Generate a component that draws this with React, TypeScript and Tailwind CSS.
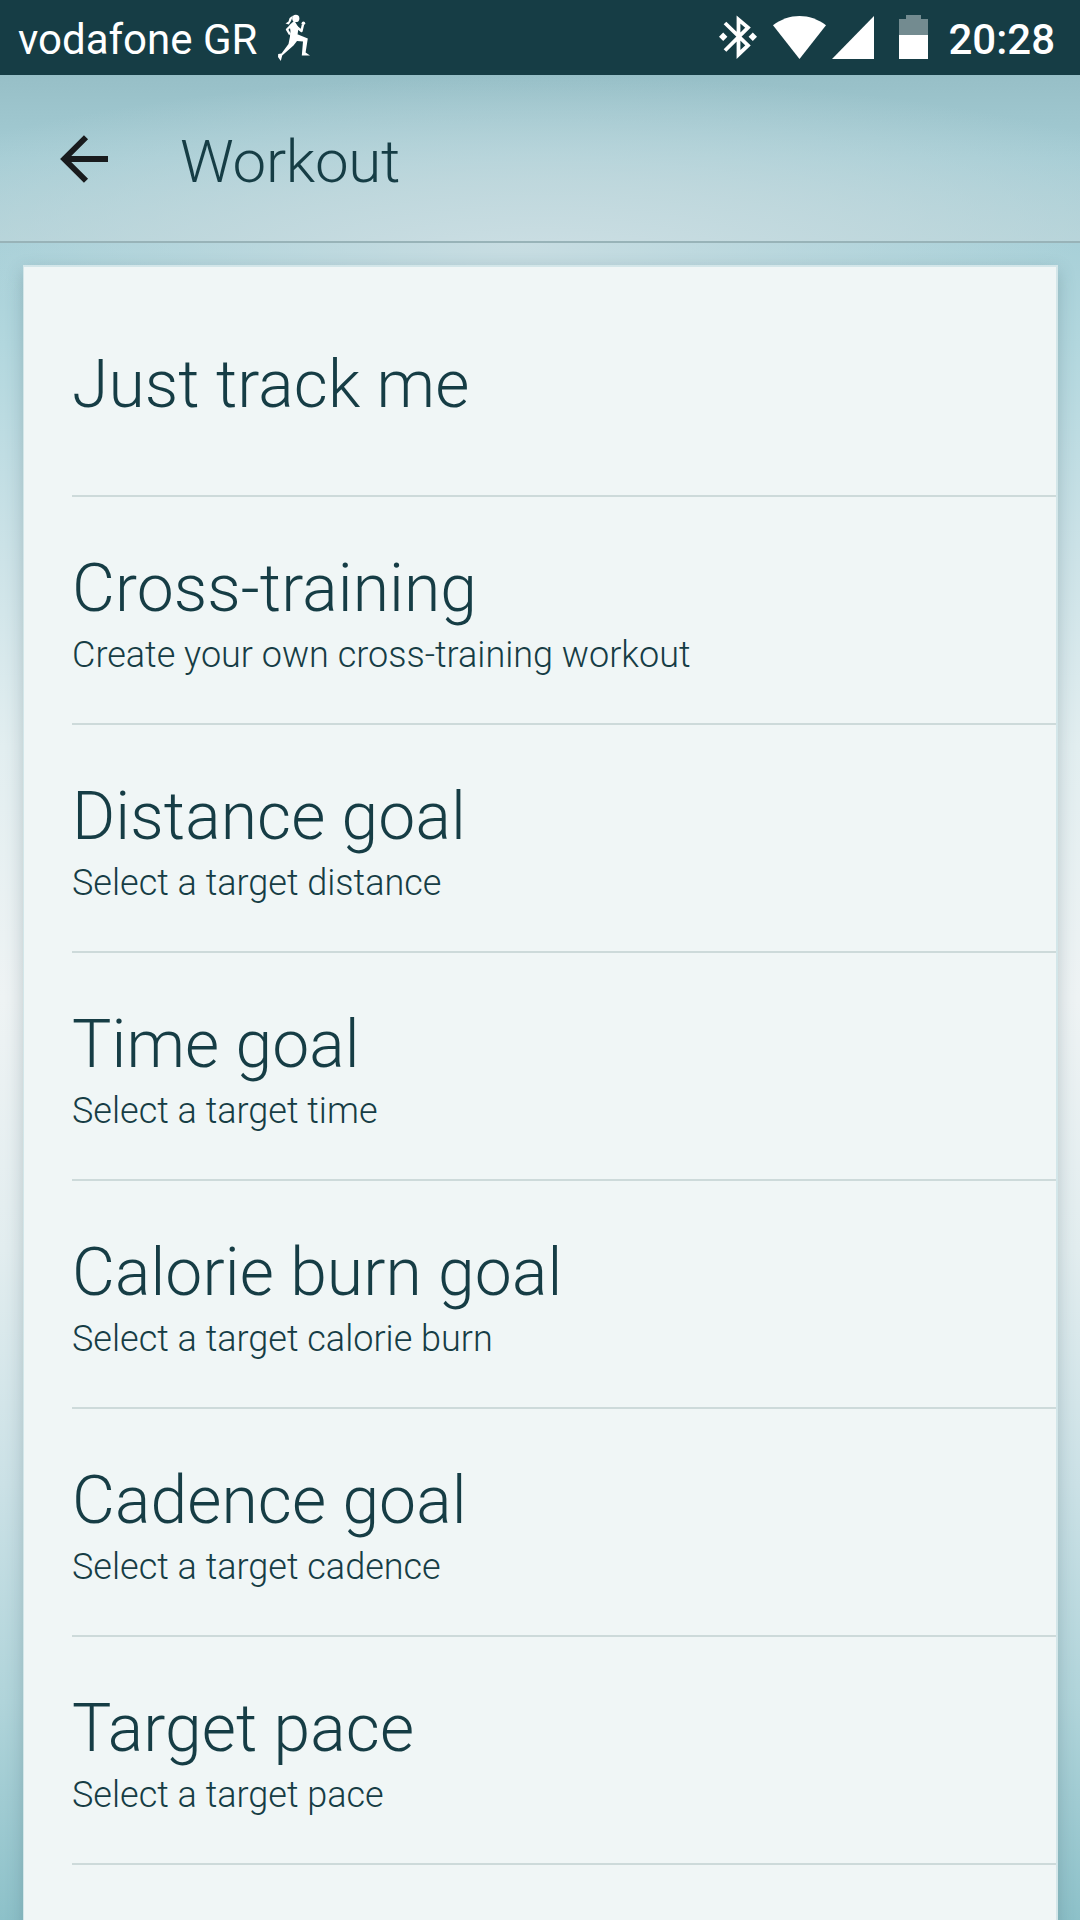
import { clsx } from "clsx";

const WORKOUTS = [
  { title: "Just track me" },
  {
    title: "Cross-training",
    hint: "Create your own cross-training workout",
  },
  { title: "Distance goal", hint: "Select a target distance" },
  { title: "Time goal", hint: "Select a target time" },
  { title: "Calorie burn goal", hint: "Select a target calorie burn" },
  { title: "Cadence goal", hint: "Select a target cadence" },
  { title: "Target pace", hint: "Select a target pace" },
];

const RunnerIcon = () => (
  <svg width="34" height="48" viewBox="0 0 34 48" fill="#fff">
    <circle cx="18.8" cy="4.4" r="3.6" />
    <path d="M16 1.5 L12.6 4 L11.5 7.5 L8.5 9.5 L11.8 10.5 L14 7 Z" />
    <path d="M12.5 11 L17 7 L18.5 8.5 L21.5 13.5 L20.5 21 L13 23 L13.5 17 Z" />
    <path
      d="M13.5 12 L10 15.5 L13 20.5 M19 12.5 L24.5 17 L26 10.5"
      fill="none"
      stroke="#fff"
      strokeWidth="2.4"
      strokeLinejoin="round"
    />
    <circle cx="26.4" cy="9.3" r="1.8" />
    <path d="M13.5 20 L21 20.5 L30.8 24.5 L28.6 38.5 L33 41.4 L24.8 41.4 L26 27.5 L20 27 L16.5 31.5 L5.2 41.5 L3.8 47 L1 43 L1.2 40 L4.5 39.5 L11.5 30 Z" />
  </svg>
);

const BluetoothIcon = () => (
  <svg width="38" height="44" viewBox="0 0 38 44" fill="none">
    <path
      d="M6 8 L29 30.5 L19.5 39.5 V4.5 L29 12.5 L6 35.5"
      stroke="#fff"
      strokeWidth="3.8"
    />
    <path
      d="M4.2 17.5 L8.4 21.7 L4.2 25.9 L0 21.7 Z M33.8 17.5 L38 21.7 L33.8 25.9 L29.6 21.7 Z"
      fill="#fff"
    />
  </svg>
);

const StatusBar = () => (
  <div className="flex h-[75px] shrink-0 items-start justify-between bg-[#163d45] text-white">
    <div className="flex pl-[18px]">
      <span className="pt-[15px] text-[42px] leading-[49px]">vodafone GR</span>
      <span className="ml-[20px] pt-[14px]">
        <RunnerIcon />
      </span>
    </div>
    <div className="flex pr-[25px]">
      <span className="pt-[15px]">
        <BluetoothIcon />
      </span>
      <svg className="ml-[16px] mt-4" width="53" height="43" viewBox="0 0 53 43">
        <path d="M0 9.3 C16 -3.1 37 -3.1 53 9.3 L26.5 43 Z" fill="#fff" />
      </svg>
      <svg className="ml-[6px] mt-4" width="42" height="43" viewBox="0 0 42 43">
        <path d="M42 0 V43 H0 Z" fill="#fff" />
      </svg>
      <svg className="ml-[25px] mt-[15px]" width="29" height="44" viewBox="0 0 29 44">
        <path d="M7 0 H22 V4 H29 V20 H0 V4 H7 Z" fill="#738b90" />
        <path d="M0 20 H29 V44 H0 Z" fill="#fff" />
      </svg>
      <span className="ml-[20px] pt-[15px] text-[42px] font-medium leading-[49px]">
        20:28
      </span>
    </div>
  </div>
);

const Toolbar = () => (
  <header className="flex h-[168px] shrink-0 items-start border-b-2 border-[#98b3b8] bg-[radial-gradient(ellipse_760px_190px_at_50%_115%,#cddfe4_0%,rgba(194,217,222,0.85)_45%,rgba(174,208,215,0)_100%),linear-gradient(180deg,#97bfc7_0%,#a4ccd4_50%,#b0d1d7_100%)]">
    <svg className="ml-[60px] mt-[60px]" width="48" height="48" viewBox="0 0 48 48">
      <path
        d="M48 24 H5 M26 2.2 L4.2 24 L26 45.8"
        fill="none"
        stroke="#191b1d"
        strokeWidth="5.8"
      />
    </svg>
    <h1 className="ml-[72px] mt-[52px] text-[60px] font-light leading-[70px] tracking-[-0.3px]">
      Workout
    </h1>
  </header>
);

export default function App() {
  return (
    <div className="flex h-[1920px] w-[1080px] flex-col overflow-hidden bg-[#a4ccd4] font-['Roboto',sans-serif] text-[#163d45]">
      <StatusBar />
      <Toolbar />
      <main className="flex-1 overflow-hidden bg-[radial-gradient(ellipse_560px_150px_at_48%_0%,#c8dde2_0%,rgba(200,221,226,0)_100%),linear-gradient(180deg,#a8d0d8_0%,#b2d7de_6%,#cbe2e7_18%,#e2eef0_30%,#eef3f4_45%,#e2edef_60%,#cbe1e6_74%,#b0d4da_87%,#8dc1c9_100%)] pl-[23px] pr-[22px] pt-[22px]">
        <div className="h-[1700px] border-2 border-l border-[#d3e6e9] bg-[#f0f6f6] pl-[48px] shadow-[0_6px_16px_rgba(60,90,98,0.28)]">
          {WORKOUTS.map(({ title, hint }, i) => (
            <div
              key={title}
              className={clsx(
                "border-b-2 border-[#cddada]",
                i === 0 ? "h-[230px] pt-[78px]" : "h-[228px] pt-[52px]",
              )}
            >
              <h2 className="text-[66px] font-light leading-[79px] tracking-[0.1px]">
                {title}
              </h2>
              {hint && (
                <p className="mt-[6px] text-[36px] font-light leading-[42px]">
                  {hint}
                </p>
              )}
            </div>
          ))}
        </div>
      </main>
    </div>
  );
}
